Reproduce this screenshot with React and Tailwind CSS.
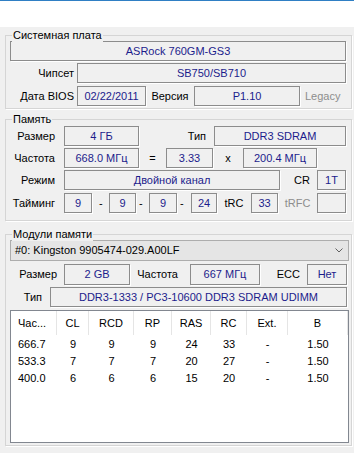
const FIELD = 'h-full shrink-0 border border-[#8c8c8c] shadow-[1px_1px_0_#ffffff] flex items-center justify-center text-[#1c1c8c] whitespace-nowrap'
const LABEL = 'h-full shrink-0 flex items-center whitespace-nowrap'

function Field({ className = '', children }) {
  return <div className={`${FIELD} ${className}`}>{children}</div>
}

function Label({ className = '', children }) {
  return <div className={`${LABEL} ${className}`}>{children}</div>
}

function Group({ title, className = '', children }) {
  return (
    <div className={`relative ml-[5px] w-[347px] border border-[#d5d5d5] shadow-[1px_1px_0_#ffffff] ${className}`}>
      <span className="absolute left-[6px] -top-[8px] px-[1px] bg-[#f0f0f0] leading-[14px] text-black">{title}</span>
      {children}
    </div>
  )
}

const COLS = [
  { key: 'f', label: 'Час...', w: 'w-[46px]', first: true },
  { key: 'cl', label: 'CL', w: 'w-[32px]' },
  { key: 'rcd', label: 'RCD', w: 'w-[45px]' },
  { key: 'rp', label: 'RP', w: 'w-[38px]' },
  { key: 'ras', label: 'RAS', w: 'w-[39px]' },
  { key: 'rc', label: 'RC', w: 'w-[36px]' },
  { key: 'ext', label: 'Ext.', w: 'w-[41px]' },
  { key: 'v', label: 'В', w: 'w-[60px]' },
]

const ROWS = [
  { f: '666.7', cl: '9', rcd: '9', rp: '9', ras: '24', rc: '33', ext: '-', v: '1.50' },
  { f: '533.3', cl: '7', rcd: '7', rp: '7', ras: '20', rc: '27', ext: '-', v: '1.50' },
  { f: '400.0', cl: '6', rcd: '6', rp: '6', ras: '15', rc: '20', ext: '-', v: '1.50' },
]

function SpdTable() {
  return (
    <div className="mt-[3px] ml-[4px] w-[339px] h-[133px] border border-[#828790] bg-white">
      <div className="flex h-[24px]">
        {COLS.map((c) => (
          <div
            key={c.key}
            className={`${c.w} h-full shrink-0 flex items-center border-r border-[#e5e5e5] ${c.first ? 'pl-[7px]' : 'justify-center'}`}
          >
            {c.label}
          </div>
        ))}
      </div>
      <div className="pt-[1px]">
        {ROWS.map((r, i) => (
          <div key={i} className="flex h-[17px]">
            {COLS.map((c) => (
              <div key={c.key} className={`${c.w} shrink-0 flex items-center ${c.first ? 'pl-[7px]' : 'justify-center'}`}>
                {r[c.key]}
              </div>
            ))}
          </div>
        ))}
      </div>
    </div>
  )
}

export default function App() {
  return (
    <div className="w-[354px] h-[453px] overflow-hidden bg-[#f0f0f0] text-[11px] leading-none text-black font-['Liberation_Sans',Arial,sans-serif]">
      <div className="h-[27px] bg-white border-t border-[#2f7fc4]" />

      <Group title="Системная плата" className="mt-[8px] h-[74px] pt-[5px]">
        <div className="flex h-[20px] pl-[4px]">
          <Field className="w-[336px]">ASRock 760GM-GS3</Field>
        </div>
        <div className="flex h-[20px] mt-[2px]">
          <Label className="w-[68px] justify-end">Чипсет</Label>
          <Field className="ml-[3px] w-[269px]">SB750/SB710</Field>
        </div>
        <div className="flex h-[20px] mt-[3px]">
          <Label className="w-[68px] justify-end">Дата BIOS</Label>
          <Field className="ml-[3px] w-[69px]">02/22/2011</Field>
          <Label className="w-[48px] justify-center">Версия</Label>
          <Field className="w-[106px]">P1.10</Field>
          <Label className="pl-[5px] text-[#8d8d8d]">Legacy</Label>
        </div>
      </Group>

      <Group title="Память" className="mt-[10px] h-[102px] pt-[6px]">
        <div className="flex h-[20px]">
          <Label className="w-[49px] justify-end">Размер</Label>
          <Field className="ml-[9px] w-[75px]">4 ГБ</Field>
          <Label className="w-[75px] justify-end pr-[8px]">Тип</Label>
          <Field className="w-[132px]">DDR3 SDRAM</Field>
        </div>
        <div className="flex h-[20px] mt-[2px]">
          <Label className="w-[49px] justify-end">Частота</Label>
          <Field className="ml-[9px] w-[75px]">668.0 МГц</Field>
          <Label className="w-[27px] justify-center">=</Label>
          <Field className="w-[47px]">3.33</Field>
          <Label className="w-[30px] justify-center">x</Label>
          <Field className="w-[74px]">200.4 МГц</Field>
        </div>
        <div className="flex h-[20px] mt-[2px]">
          <Label className="w-[49px] justify-end">Режим</Label>
          <Field className="ml-[9px] w-[216px]">Двойной канал</Field>
          <Label className="w-[37px] justify-end pr-[7px]">CR</Label>
          <Field className="w-[29px]">1T</Field>
        </div>
        <div className="flex h-[20px] mt-[3px]">
          <Label className="w-[49px] justify-end">Тайминг</Label>
          <Field className="ml-[9px] w-[28px]">9</Field>
          <Label className="w-[17px] pl-[7px]">-</Label>
          <Field className="w-[27px]">9</Field>
          <Label className="w-[13px] pl-[3px]">-</Label>
          <Field className="w-[28px]">9</Field>
          <Label className="w-[14px] pl-[3px]">-</Label>
          <Field className="w-[26px]">24</Field>
          <Label className="w-[34px] justify-center">tRC</Label>
          <Field className="w-[27px]">33</Field>
          <Label className="w-[39px] justify-center text-[#8d8d8d]">tRFC</Label>
          <Field className="w-[29px]" />
        </div>
      </Group>

      <Group title="Модули памяти" className="mt-[13px] h-[212px] pt-[5px]">
        <div className="ml-[4px] w-[339px] h-[21px] border border-[#adadad] bg-[#e5e5e5] flex items-center pl-[4px] pr-[5px]">
          <span className="flex-1">#0: Kingston 9905474-029.A00LF</span>
          <svg width="8" height="5" viewBox="0 0 8 5" fill="none" stroke="#606060" strokeWidth="1">
            <path d="M0.5 0.5 L4 4 L7.5 0.5" />
          </svg>
        </div>
        <div className="flex h-[21px] mt-[3px]">
          <Label className="w-[51px] justify-end">Размер</Label>
          <Field className="ml-[7px] w-[66px]">2 GB</Field>
          <Label className="w-[60px] justify-end pr-[12px]">Частота</Label>
          <Field className="w-[70px]">667 МГц</Field>
          <Label className="w-[47px] justify-end pr-[7px]">ECC</Label>
          <Field className="w-[40px]">Нет</Field>
        </div>
        <div className="flex h-[20px] mt-[2px]">
          <Label className="w-[44px] justify-end pr-[8px]">Тип</Label>
          <Field className="w-[297px]">DDR3-1333 / PC3-10600 DDR3 SDRAM UDIMM</Field>
        </div>
        <SpdTable />
      </Group>
    </div>
  )
}
